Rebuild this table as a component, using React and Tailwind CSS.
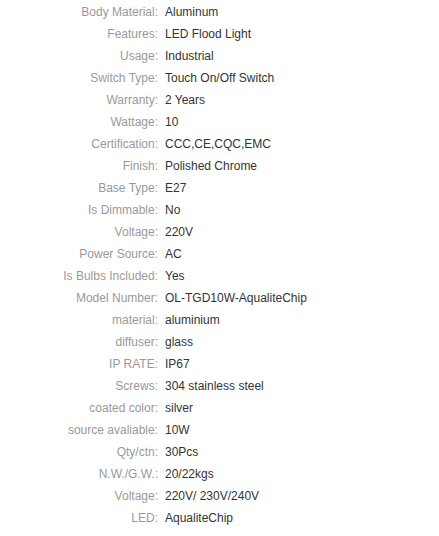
const specs = [
  ['Body Material', 'Aluminum'],
  ['Features', 'LED Flood Light'],
  ['Usage', 'Industrial'],
  ['Switch Type', 'Touch On/Off Switch'],
  ['Warranty', '2 Years'],
  ['Wattage', '10'],
  ['Certification', 'CCC,CE,CQC,EMC'],
  ['Finish', 'Polished Chrome'],
  ['Base Type', 'E27'],
  ['Is Dimmable', 'No'],
  ['Voltage', '220V'],
  ['Power Source', 'AC'],
  ['Is Bulbs Included', 'Yes'],
  ['Model Number', 'OL-TGD10W-AqualiteChip'],
  ['material', 'aluminium'],
  ['diffuser', 'glass'],
  ['IP RATE', 'IP67'],
  ['Screws', '304 stainless steel'],
  ['coated color', 'silver'],
  ['source avaliable', '10W'],
  ['Qty/ctn', '30Pcs'],
  ['N.W./G.W.', '20/22kgs'],
  ['Voltage', '220V/ 230V/240V'],
  ['LED', 'AqualiteChip'],
]

export default function App() {
  return (
    <div className="min-h-[536px] w-[439px] bg-white pt-px font-['Liberation_Sans',Arial,sans-serif] text-[12px]">
      {specs.map(([label, value], i) => (
        <div key={i} className="flex h-[22px] items-center leading-[22px]">
          <span className="w-[158px] shrink-0 text-right text-[#999999]">{label}:</span>
          <span className="pl-[7px] text-[#333333]">{value}</span>
        </div>
      ))}
    </div>
  )
}
